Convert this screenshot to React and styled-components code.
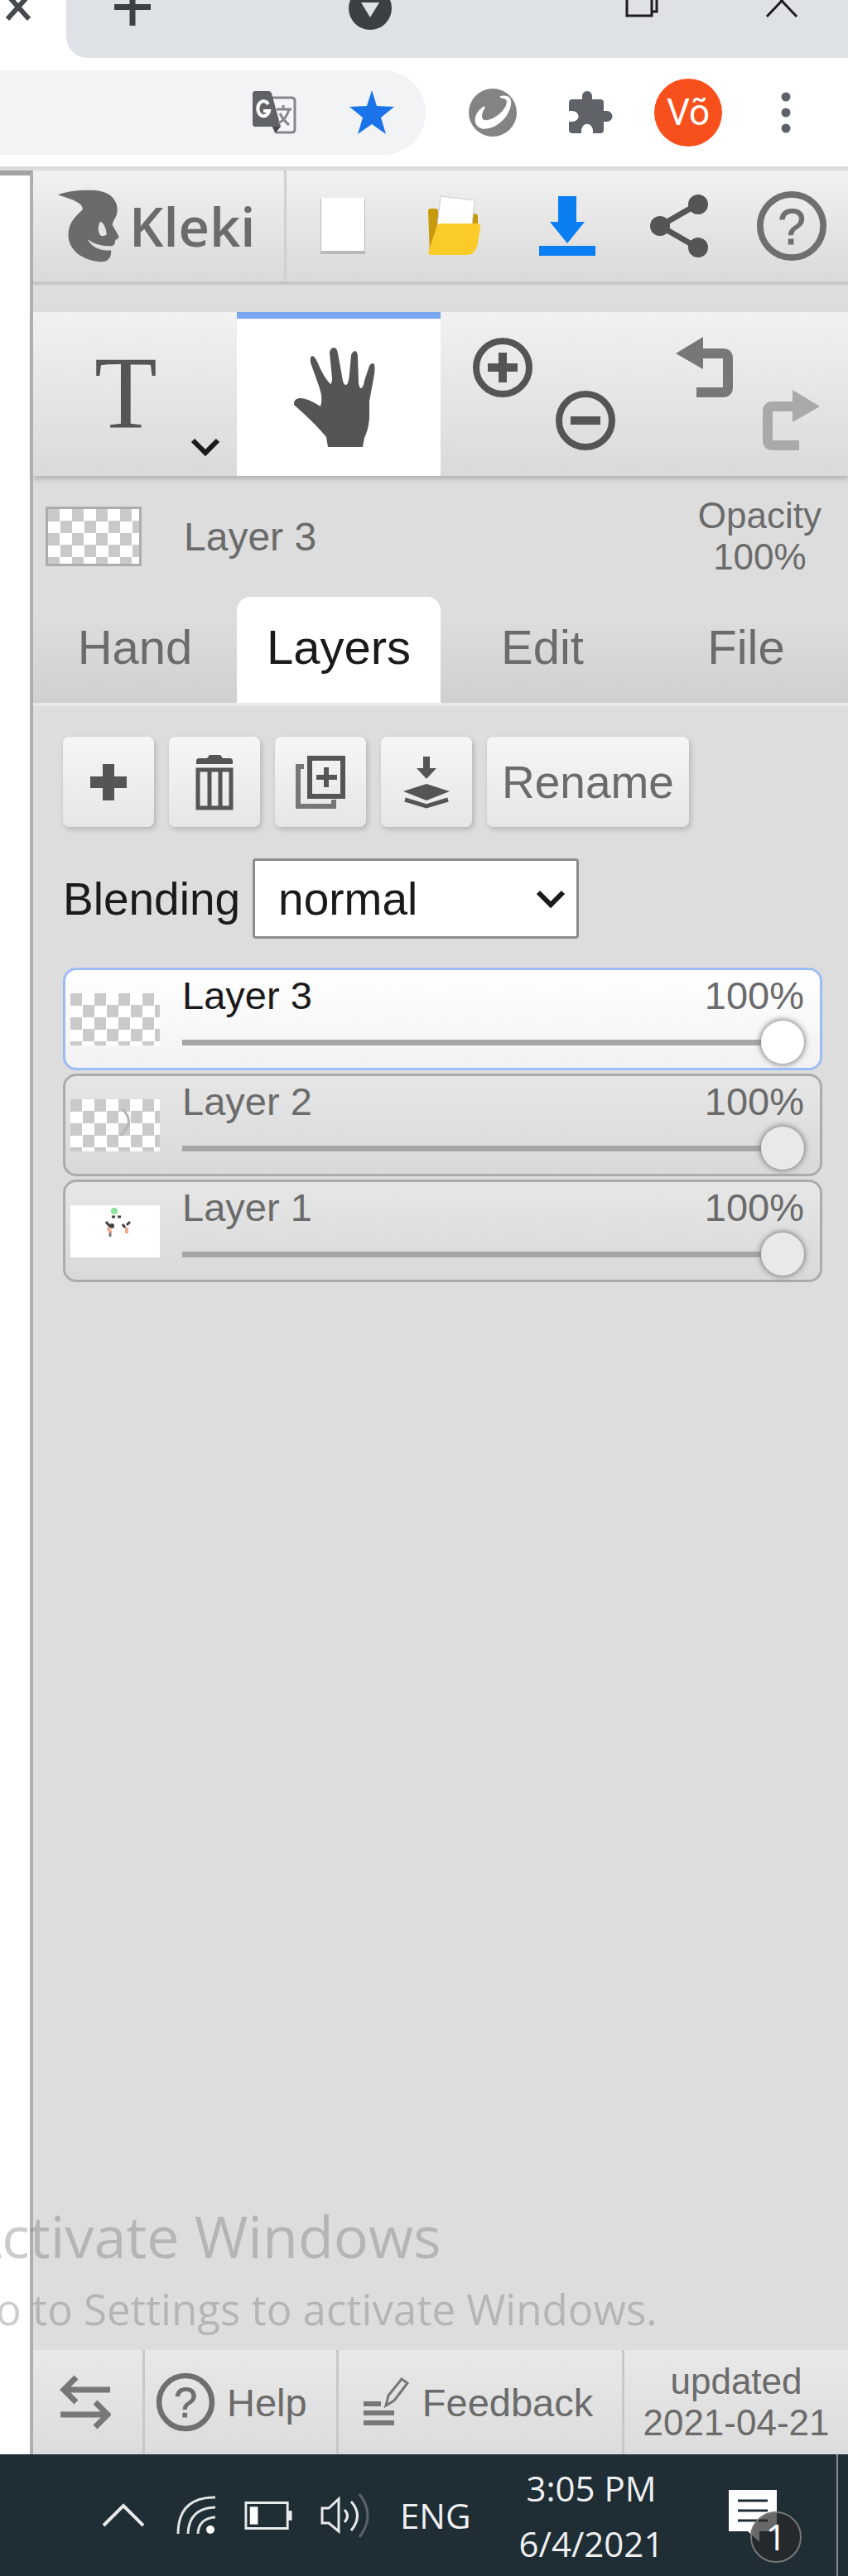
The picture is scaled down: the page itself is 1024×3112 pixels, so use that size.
import React, { useState } from 'react'
import styled, { createGlobalStyle } from 'styled-components'

const GlobalStyle = createGlobalStyle`
  * { box-sizing: border-box; }
  body {
    margin: 0;
    font-family: 'Liberation Sans', Arial, sans-serif;
    background: #fff;
  }
  button, input, select { font-family: inherit; color: inherit; }
  button { padding: 0; border: 0; background: none; cursor: pointer; }
  svg { display: block; flex: none; }
`

const Page = styled.div`
  min-height: 100vh;
  display: flex;
  flex-direction: column;
  overflow: hidden;
`

// Browser chrome
const TitleBar = styled.div`
  display: flex;
  height: 70px;
`
const ActiveTab = styled.div`
  width: 80px;
  padding-left: 6px;
`
const TabStrip = styled.div`
  flex: 1;
  display: flex;
  align-items: flex-start;
  padding: 0 60px 0 57px;
  background: #dee1e6;
  border-bottom-left-radius: 26px;
`
const TabSearch = styled.button`
  margin-left: 238px;
`
const WindowButtons = styled.div`
  margin-left: auto;
  display: flex;
  gap: 128px;
`
const Toolbar = styled.div`
  display: flex;
  align-items: center;
  height: 136px;
  padding: 0 16px 0 0;
  border-bottom: 5px solid #d9dadf;
`
const Omnibox = styled.div`
  flex: 1;
  min-width: 0;
  display: flex;
  align-items: center;
  height: 102px;
  margin-right: 22px;
  padding-right: 6px;
  background: #f1f3f4;
  border-radius: 0 51px 51px 0;
`
const AddressInput = styled.input`
  flex: 1;
  min-width: 0;
  border: 0;
  outline: 0;
  background: transparent;
`
const ToolbarButton = styled.button`
  width: 118px;
  display: flex;
  justify-content: center;
`
const Avatar = styled.span`
  width: 82px;
  height: 82px;
  border-radius: 50%;
  background: #f8501c;
  color: #fff;
  font: 44px/82px Roboto, sans-serif;
  text-align: center;
`

// Kleki
const Workspace = styled.div`
  position: relative;
  flex: 1;
  display: flex;
`
const Canvas = styled.div`
  width: 40px;
  background: #fff;
  border-top: 6px solid #a2a2a2;
  border-right: 4px solid #aeaeae;
`
const Panel = styled.div`
  flex: 1;
  min-width: 0;
  display: flex;
  flex-direction: column;
  background: #dddddd;
  color: #6b6b6b;
`
const Header = styled.div`
  display: flex;
  height: 138px;
  background: linear-gradient(#f1f1f1, #dadada);
  border-bottom: 4px solid #c6c6c6;
`
const Logo = styled.a`
  width: 306px;
  display: flex;
  align-items: center;
  gap: 11px;
  padding-left: 29px;
  border-right: 3px solid #d0d0d0;
  font: 600 65px/88px 'Open Sans', sans-serif;
  color: #6b6b6b;
  text-decoration: none;
`
const HeaderActions = styled.div`
  flex: 1;
  display: grid;
  grid-template-columns: repeat(5, 1fr);
`
const IconButton = styled.button`
  display: flex;
  align-items: center;
  justify-content: center;
`
const ToolRow = styled.div`
  display: grid;
  grid-template-columns: repeat(4, 1fr);
  height: 198px;
  margin-top: 33px;
  background: linear-gradient(#f1f1f1, #dadada);
  box-shadow: 0 4px 6px #b4b4b4;
`
const TextTool = styled.button`
  display: flex;
  align-items: center;
  padding-left: 74px;
  color: #555;
  font: 124px/140px 'Liberation Serif', serif;
`
const ToolArrow = styled.span`
  align-self: flex-end;
  margin-left: 40px;
  padding-bottom: 22px;
`
const HandTool = styled(IconButton)`
  padding-right: 8px;
  background: #fff;
  border-top: 8px solid #7ba6f2;
`
const ToolPair = styled.div`
  display: flex;
  justify-content: space-between;
  align-items: flex-start;
  padding: 30px 34px 30px 38px;

  button:last-child { align-self: flex-end; }
`
const LayerPreview = styled.div`
  display: flex;
  align-items: center;
  height: 146px;
  padding: 0 32px 0 15px;
  font-size: 48px;
`
const PreviewThumb = styled.div`
  width: 116px;
  height: 72px;
  margin-right: 51px;
  border: 3px solid #acacac;
  background: repeating-conic-gradient(#fff 0 25%, #cacaca 0 50%) 0 0 / 29px 29px;
`
const Opacity = styled.div`
  margin-left: auto;
  font-size: 44px;
  line-height: 50px;
  text-align: center;
`
const Tabs = styled.div`
  display: grid;
  grid-template-columns: repeat(4, 1fr);
  height: 132px;
  background: linear-gradient(#dddddd 20%, #d0d0d0);
  border-bottom: 4px solid #e9e9e9;
`
const Tab = styled.button`
  padding-bottom: 8px;
  font-size: 58px;
  color: ${({ $active }) => ($active ? '#1a1a1a' : '#6b6b6b')};
  background: ${({ $active }) => ($active ? '#fff' : 'transparent')};
  border-radius: 16px 16px 0 0;
`
const LayersPane = styled.div`
  flex: 1;
  padding: 37px 31px 0 36px;
`
const ButtonRow = styled.div`
  display: flex;
  gap: 18px;
`
const PaneButton = styled.button`
  display: flex;
  align-items: center;
  justify-content: center;
  width: ${({ $wide }) => ($wide ? '244px' : '110px')};
  height: 109px;
  font-size: 55px;
  background: linear-gradient(#f6f6f6, #e6e6e6);
  border-radius: 8px;
  box-shadow: 2px 3px 6px #b4b4b4;
`
const BlendRow = styled.div`
  display: flex;
  align-items: center;
  gap: 15px;
  margin: 38px 0 35px;
  font-size: 55px;
  color: #1a1a1a;
`
const SelectBox = styled.div`
  position: relative;
  svg {
    position: absolute;
    right: 16px;
    top: 38px;
    pointer-events: none;
  }
`
const Select = styled.select`
  appearance: none;
  width: 394px;
  height: 97px;
  padding: 0 28px;
  font-size: 55px;
  background: #fff;
  border: 3px solid #8c8c8c;
  border-radius: 4px;
`
const LayerList = styled.div`
  display: flex;
  flex-direction: column;
  gap: 4px;
`
const LayerCard = styled.div`
  display: flex;
  align-items: center;
  gap: 27px;
  height: 124px;
  padding: 0 19px 0 6px;
  border: 3px solid ${({ $active }) => ($active ? '#9dbcf5' : '#ababab')};
  border-radius: 16px;
  background: ${({ $active }) => ($active ? 'linear-gradient(#fff, #f2f2f2)' : 'linear-gradient(#e6e6e6, #d9d9d9)')};
`
const LayerThumb = styled.div`
  width: 108px;
  height: 63px;
  background: ${({ $filled }) => ($filled ? '#fff' : 'repeating-conic-gradient(#fff 0 25%, #cacaca 0 50%) 0 0 / 29px 29px')};
`
const LayerBody = styled.div`
  flex: 1;
  min-width: 0;
`
const LayerTitle = styled.div`
  display: flex;
  justify-content: space-between;
  font-size: 47px;
  line-height: 54px;
  label { color: ${({ $active }) => ($active ? '#1a1a1a' : 'inherit')}; }
`
const Slider = styled.input`
  appearance: none;
  display: block;
  width: 100%;
  height: 54px;
  margin: 2px 0 0;
  background: linear-gradient(#a6a6a6, #a6a6a6) 0 50% / 97% 7px no-repeat;

  &::-webkit-slider-thumb {
    appearance: none;
    width: 52px;
    height: 52px;
    border-radius: 50%;
    background: ${({ $active }) => ($active ? '#fff' : '#e9e9e9')};
    box-shadow: 0 0 7px 1px #777;
  }
`
const Footer = styled.div`
  display: flex;
  height: 126px;
  background: linear-gradient(#e8e8e8, #dcdcdc);
`
const FooterItem = styled.button`
  display: flex;
  align-items: center;
  justify-content: center;
  gap: 14px;
  width: ${({ $width }) => $width};
  flex: ${({ $grow }) => ($grow ? 1 : 'none')};
  padding-right: 6px;
  font-size: 47px;
  border-right: 3px solid #c8c8c8;
`
const HelpItem = styled(FooterItem)`
  justify-content: flex-start;
  padding-left: 13px;
`
const Updated = styled.div`
  align-self: center;
  width: 270px;
  font-size: 44px;
  line-height: 50px;
  text-align: center;
`
const Watermark = styled.div`
  position: absolute;
  left: -42px;
  bottom: 142px;
  color: rgba(110, 110, 110, 0.36);
  font: 51px/68px 'Open Sans', sans-serif;
  white-space: nowrap;
  pointer-events: none;
`
const WatermarkTitle = styled.div`
  font-size: 70px;
  line-height: 108px;
`

// Windows taskbar
const Taskbar = styled.div`
  display: flex;
  align-items: center;
  height: 147px;
  padding-right: 12px;
  background: #1f2d35;
  color: #eef0f1;
  font: 42px/67px 'Open Sans', sans-serif;
`
const Tray = styled.div`
  display: flex;
  align-items: center;
  gap: 34px;
  padding-left: 123px;
`
const Clock = styled.div`
  margin-left: 58px;
  text-align: center;
`
const Notifications = styled.button`
  position: relative;
  margin-left: auto;
  margin-right: 71px;
`
const Badge = styled.span`
  position: absolute;
  left: 27px;
  top: 27px;
  width: 62px;
  height: 62px;
  border: 2px solid #777;
  border-radius: 50%;
  background: rgba(40, 40, 40, 0.7);
  color: #fff;
  font: 44px/56px 'Open Sans', sans-serif;
  text-align: center;
`
const DesktopEdge = styled.div`
  align-self: stretch;
  width: 2px;
  background: #87898c;
`

const CloseTabIcon = () => (
  <svg width="32" height="26" viewBox="0 0 32 26" stroke="#45494d" strokeWidth="6">
    <path d="M3 -6 29 23M29 -6 3 23" />
  </svg>
)
const NewTabIcon = () => (
  <svg width="46" height="32" viewBox="0 0 46 32" stroke="#3c4043" strokeWidth="7">
    <path d="M1 8.500H45M23 0V31" />
  </svg>
)
const TabSearchIcon = () => (
  <svg width="52" height="37" viewBox="0 0 52 37">
    <circle cx="26" cy="10" r="26" fill="#3c4043" />
    <path d="M15 3H37L26 21Z" fill="#dee1e6" />
  </svg>
)
const RestoreIcon = () => (
  <svg width="42" height="22" viewBox="0 0 42 22" fill="none" stroke="#1d1d1f" strokeWidth="3">
    <path d="M3 0V19H33V0M33 14H39V0" />
  </svg>
)
const CloseIcon = () => (
  <svg width="40" height="22" viewBox="0 0 40 22" fill="none" stroke="#1d1d1f" strokeWidth="3">
    <path d="M2 20 20 1 38 20M18 0H22" />
  </svg>
)
const TranslateIcon = () => (
  <svg width="54" height="54" viewBox="0 0 54 54">
    <path d="M23 9H48Q52 9 52 13V47Q52 51 48 51H30L25 43" fill="#f5f6f7" stroke="#85888b" strokeWidth="3" />
    <path d="M4 1H20Q23 1 24 4L35 44H4Q1 44 1 40V5Q1 1 4 1Z" fill="#5f6368" />
    <path d="M20 17A7 9 0 1 0 21 25H14" fill="none" stroke="#fff" strokeWidth="4" />
    <path d="M30 23H48M38 18V23M45 23Q42 35 32 40M34 28Q38 36 45 42" fill="none" stroke="#85888b" strokeWidth="3" />
    <path d="M26 44H35L28 52Z" fill="#45484b" />
  </svg>
)
const StarIcon = () => (
  <svg width="54" height="54" viewBox="0 0 54 54">
    <path d="M27 0 33 19 54 20 38 33 44 53 27 41 10 53 16 33 0 20 21 19Z" fill="#1a73e8" />
  </svg>
)
const SwirlIcon = () => (
  <svg width="60" height="60" viewBox="0 0 60 60">
    <circle cx="30" cy="30" r="29" fill="#838383" />
    <path d="M39 11Q53 8 51 21Q47 38 31 46Q14 53 10 42Q8 31 20 23Q14 33 17 38Q21 43 32 37Q47 28 48 17Q48 12 39 11Z" fill="#fff" stroke="#fff" strokeWidth="2" />
  </svg>
)
const PuzzleIcon = () => (
  <svg width="54" height="54" viewBox="0 0 54 54">
    <path d="M5 11H17V7A6 6 0 0 1 29 7V11H39Q43 11 43 15V25H47A6 6 0 0 1 47 38H43V48Q43 52 39 52H30V49A6 7 0 0 0 16 49V52H5Q1 52 1 48V38H5A7 6 0 0 0 5 25H1V15Q1 11 5 11Z" fill="#5f6368" />
  </svg>
)
const MenuIcon = () => (
  <svg width="12" height="50" viewBox="0 0 12 50" fill="#5f6368">
    <circle cx="6" cy="6" r="5.500" />
    <circle cx="6" cy="25" r="5.500" />
    <circle cx="6" cy="44" r="5.500" />
  </svg>
)
const KlekiIcon = () => (
  <svg width="76" height="88" viewBox="88 92 228 266">
    <path
      fillRule="evenodd"
      fill="#6b6b6b"
      d="M90 112C125 96 190 92 235 96C288 103 312 140 306 175C304 195 290 203 289 222L312 262Q313 272 299 276Q301 294 285 298Q235 301 198 273Q222 317 284 314Q286 336 273 348Q260 358 238 355C175 348 128 310 128 258C128 212 155 190 180 165C184 140 130 124 90 112ZM246 208C235 220 235 245 244 258Q255 266 268 256Q265 220 246 208Z"
    />
  </svg>
)
const NewIcon = () => (
  <svg width="56" height="72" viewBox="0 0 56 72">
    <path d="M1 3H55V70H1Z" fill="#b9b9b9" />
    <path d="M2 2H54V66H2Z" fill="#fff" />
  </svg>
)
const FolderIcon = () => (
  <svg width="68" height="76" viewBox="0 0 68 76">
    <path d="M2 20Q2 17 5 17H11Q14 17 14 21V24H56Q60 22 62 25V60L4 72Z" fill="#c79a0b" />
    <path d="M17 2 58 7 54 48H12Z" fill="#fff" stroke="#ccc" />
    <path d="M17 35H61Q66 35 65 41L61 63Q58 73 48 73H6Q1 73 3 67L12 40Q13 35 17 35Z" fill="#fbcb2a" />
  </svg>
)
const SaveIcon = () => (
  <svg width="68" height="74" viewBox="0 0 68 74" fill="#0b7ff2">
    <path d="M23 1H45V32H55L34 58 13 32H23ZM0 61H68V73H0Z" />
  </svg>
)
const ShareIcon = () => (
  <svg width="72" height="78" viewBox="0 0 72 78" fill="#555">
    <path d="M57 13 12 39 57 65" fill="none" stroke="#555" strokeWidth="7" />
    <circle cx="12" cy="39" r="12" />
    <circle cx="58" cy="13" r="12" />
    <circle cx="58" cy="65" r="12" />
  </svg>
)
const HelpIcon = ({ size, color = '#6f6f6f' }) => (
  <svg width={size} height={size} viewBox="0 0 88 88">
    <circle cx="44" cy="44" r="39" fill="none" stroke={color} strokeWidth="8" />
    <text x="44" y="66" textAnchor="middle" fontSize="62" fontFamily="Liberation Sans, sans-serif" fill={color} stroke={color}>?</text>
  </svg>
)
const Chevron = ({ color = '#1a1a1a' }) => (
  <svg width="36" height="24" viewBox="0 0 36 24" fill="none" stroke={color} strokeWidth="6">
    <path d="M3 3 18 18 33 3" />
  </svg>
)
const HandIcon = () => (
  <svg width="100" height="120" viewBox="0 0 100 120">
    <path
      fill="#555"
      d="M39 108Q25 91 0 69Q-1 62 7 61Q15 60 32 71Q35 61 31 49L20 18Q19 11 22 10Q25 10 29 19Q36 36 44 44Q46 43 46 37L43 6Q44 0 48 0Q52 0 53 7L59 40Q60 45 63 45Q66 44 67 32L69 9Q71 4 74 4Q77 5 77 12L78 43Q79 49 81 49Q84 48 85 40L91 22Q94 17 97 20Q98 24 97 32L91 65V85Q90 99 85 109L83 120H41Z"
    />
  </svg>
)
const ZoomIcon = ({ plus }) => (
  <svg width="74" height="74" viewBox="0 0 74 74" fill="none" stroke="#555">
    <circle cx="37" cy="37" r="32" strokeWidth="8" />
    <path d={plus ? 'M19 37H55M37 19V55' : 'M19 37H55'} strokeWidth="10" />
  </svg>
)
const UndoIcon = () => (
  <svg width="70" height="74" viewBox="0 0 70 74">
    <path d="M26 20H57Q63 20 63 26V61Q63 67 57 67H25" fill="none" stroke="#777" strokeWidth="12" />
    <path d="M0 20 33 0V39Z" fill="#777" />
  </svg>
)
const RedoIcon = () => (
  <svg width="70" height="74" viewBox="0 0 70 74">
    <path d="M44 20H13Q7 20 7 26V61Q7 67 13 67H45" fill="none" stroke="#a9a9a9" strokeWidth="12" />
    <path d="M70 20 37 0V39Z" fill="#a9a9a9" />
  </svg>
)
const AddIcon = () => (
  <svg width="44" height="46" viewBox="0 0 44 46" stroke="#555" strokeWidth="14">
    <path d="M0 23H44M22 1V45" />
  </svg>
)
const TrashIcon = () => (
  <svg width="46" height="68" viewBox="0 0 46 68" fill="none" stroke="#555">
    <path d="M1 12V8Q1 5 5 5H14L17 1H30L33 5H41Q45 5 45 8V12Z" fill="#555" stroke="none" />
    <path d="M3 19H43V65H3Z" strokeWidth="5" />
    <path d="M17 18V66M30 18V66" strokeWidth="5" />
  </svg>
)
const DuplicateIcon = () => (
  <svg width="60" height="64" viewBox="0 0 60 64" fill="none" stroke="#555" strokeWidth="6">
    <path d="M17 3H57V49H17Z" />
    <path d="M10 13H3V61H46V53" stroke="#777" />
    <path d="M25 26H50M37 14V38" />
  </svg>
)
const MergeIcon = () => (
  <svg width="58" height="64" viewBox="0 0 58 64" fill="#555">
    <path d="M25 1H33V15H41L29 28 17 15H25Z" />
    <path d="M29 34 57 43 29 54 1 43Z" />
    <path d="M3 53 29 61 55 53" fill="none" stroke="#555" strokeWidth="5" />
  </svg>
)
const SwapIcon = () => (
  <svg width="62" height="66" viewBox="0 0 62 66" fill="none" stroke="#777" strokeWidth="7">
    <path d="M61 18H4M20 3 5 18 20 33M1 48H58M43 33 58 48 43 63" />
  </svg>
)
const FeedbackIcon = () => (
  <svg width="58" height="60" viewBox="0 0 58 60" fill="none" stroke="#777">
    <path d="M1 32H22M1 43H38M1 55H38" strokeWidth="6" />
    <path d="M28 34 31 22 47 2 54 7 38 28Z" strokeWidth="3" />
  </svg>
)
const CaretUpIcon = () => (
  <svg width="52" height="30" viewBox="0 0 52 30" fill="none" stroke="#e8eaeb" strokeWidth="4">
    <path d="M2 27 26 3 50 27" />
  </svg>
)
const WifiIcon = () => (
  <svg width="52" height="48" viewBox="-4 0 52 48" fill="none" stroke="#e0e3e4" strokeWidth="3">
    <path d="M2 46Q2 2 47 2M14 46Q15 15 47 14M26 46Q27 27 47 26" />
    <circle cx="41" cy="41" r="5" fill="#fff" stroke="none" />
  </svg>
)
const BatteryIcon = () => (
  <svg width="58" height="36" viewBox="0 0 60 36" fill="none" stroke="#e8eaeb" strokeWidth="3">
    <path d="M2 2H54V34H2Z" />
    <path d="M7 7H17V29H7Z" fill="#fff" stroke="none" />
    <path d="M57 12V24" strokeWidth="5" />
  </svg>
)
const SpeakerIcon = () => (
  <svg width="62" height="56" viewBox="2 0 62 56" fill="none" stroke="#e8eaeb" strokeWidth="3">
    <path d="M4 19H12L24 8V47L12 37H4Z" />
    <path d="M31 21Q38 28 31 36M39 11Q54 28 39 46" />
    <path d="M49 2Q69 28 49 54" stroke="#58636a" />
  </svg>
)
const MessageIcon = () => (
  <svg width="60" height="64" viewBox="0 0 60 64">
    <path d="M1 1H59V51H38V64L24 51H1Z" fill="#fff" />
    <path d="M12 14H48M12 26H48M12 38H48" stroke="#1f2d35" strokeWidth="3" />
  </svg>
)
const FlowerSketch = () => (
  <svg width="108" height="63" viewBox="0 0 108 63">
    <circle cx="53" cy="7" r="4" fill="#8fe39a" />
    <path d="M50 14H54M57 14H61M43 20 48 26M72 20 68 24M63 23 66 27" stroke="#444" strokeWidth="3" />
    <circle cx="50" cy="25" r="3" fill="#444" />
    <path d="M45 27 49 33M68 27V34" stroke="#f5a888" strokeWidth="4" />
    <path d="M48 33V38" stroke="#777" strokeWidth="3" />
  </svg>
)
const LineSketch = () => (
  <svg width="108" height="63" viewBox="0 0 108 63" fill="none" stroke="#b5b5b5" strokeWidth="3">
    <path d="M63 12Q74 23 69 33L61 44" />
  </svg>
)

const layers = [
  { id: 3, name: 'Layer 3' },
  { id: 2, name: 'Layer 2', sketch: <LineSketch /> },
  { id: 1, name: 'Layer 1', sketch: <FlowerSketch />, filled: true },
]

const BrowserChrome = () => (
  <header>
    <TitleBar>
      <ActiveTab><button aria-label="Close tab"><CloseTabIcon /></button></ActiveTab>
      <TabStrip>
        <button aria-label="New tab"><NewTabIcon /></button>
        <TabSearch aria-label="Search tabs"><TabSearchIcon /></TabSearch>
        <WindowButtons>
          <button aria-label="Restore"><RestoreIcon /></button>
          <button aria-label="Close"><CloseIcon /></button>
        </WindowButtons>
      </TabStrip>
    </TitleBar>
    <Toolbar>
      <Omnibox>
        <AddressInput aria-label="Address" />
        <ToolbarButton aria-label="Translate"><TranslateIcon /></ToolbarButton>
        <ToolbarButton aria-label="Bookmark"><StarIcon /></ToolbarButton>
      </Omnibox>
      <ToolbarButton aria-label="Extension"><SwirlIcon /></ToolbarButton>
      <ToolbarButton aria-label="Extensions"><PuzzleIcon /></ToolbarButton>
      <ToolbarButton aria-label="Profile"><Avatar>Võ</Avatar></ToolbarButton>
      <ToolbarButton aria-label="Menu"><MenuIcon /></ToolbarButton>
    </Toolbar>
  </header>
)

const Layer = ({ layer, active, onSelect }) => {
  const [opacity, setOpacity] = useState(100)
  const id = `layer-${layer.id}`

  return (
    <LayerCard $active={active} onClick={onSelect}>
      <LayerThumb $filled={layer.filled}>{layer.sketch}</LayerThumb>
      <LayerBody>
        <LayerTitle $active={active}>
          <label htmlFor={id}>{layer.name}</label>
          <span>{opacity}%</span>
        </LayerTitle>
        <Slider id={id} type="range" min="0" max="100" value={opacity} $active={active} onChange={e => setOpacity(e.target.value)} />
      </LayerBody>
    </LayerCard>
  )
}

const App = () => {
  const [tab, setTab] = useState('Layers')
  const [activeLayer, setActiveLayer] = useState(3)

  return (
    <Page>
      <GlobalStyle />
      <BrowserChrome />
      <Workspace>
        <Canvas />
        <Panel>
          <Header>
            <Logo href="#"><KlekiIcon />Kleki</Logo>
            <HeaderActions>
              <IconButton aria-label="New"><NewIcon /></IconButton>
              <IconButton aria-label="Open"><FolderIcon /></IconButton>
              <IconButton aria-label="Save"><SaveIcon /></IconButton>
              <IconButton aria-label="Share"><ShareIcon /></IconButton>
              <IconButton aria-label="Help"><HelpIcon size={86} /></IconButton>
            </HeaderActions>
          </Header>
          <ToolRow>
            <TextTool aria-label="Text tool">T<ToolArrow><Chevron /></ToolArrow></TextTool>
            <HandTool aria-label="Hand tool"><HandIcon /></HandTool>
            <ToolPair>
              <button aria-label="Zoom in"><ZoomIcon plus /></button>
              <button aria-label="Zoom out"><ZoomIcon /></button>
            </ToolPair>
            <ToolPair>
              <button aria-label="Undo"><UndoIcon /></button>
              <button aria-label="Redo"><RedoIcon /></button>
            </ToolPair>
          </ToolRow>
          <LayerPreview>
            <PreviewThumb />
            Layer {activeLayer}
            <Opacity>Opacity<br />100%</Opacity>
          </LayerPreview>
          <Tabs>
            {['Hand', 'Layers', 'Edit', 'File'].map(name => (
              <Tab key={name} $active={name === tab} onClick={() => setTab(name)}>{name}</Tab>
            ))}
          </Tabs>
          <LayersPane>
            <ButtonRow>
              <PaneButton aria-label="Add layer"><AddIcon /></PaneButton>
              <PaneButton aria-label="Remove layer"><TrashIcon /></PaneButton>
              <PaneButton aria-label="Duplicate layer"><DuplicateIcon /></PaneButton>
              <PaneButton aria-label="Merge layer"><MergeIcon /></PaneButton>
              <PaneButton $wide>Rename</PaneButton>
            </ButtonRow>
            <BlendRow>
              <label htmlFor="blending">Blending</label>
              <SelectBox>
                <Select id="blending">
                  <option>normal</option>
                  <option>multiply</option>
                  <option>screen</option>
                </Select>
                <Chevron />
              </SelectBox>
            </BlendRow>
            <LayerList>
              {layers.map(layer => (
                <Layer key={layer.id} layer={layer} active={layer.id === activeLayer} onSelect={() => setActiveLayer(layer.id)} />
              ))}
            </LayerList>
          </LayersPane>
          <Footer>
            <FooterItem $width="135px" aria-label="Switch sides"><SwapIcon /></FooterItem>
            <HelpItem $width="234px"><HelpIcon size={72} />Help</HelpItem>
            <FooterItem $grow><FeedbackIcon />Feedback</FooterItem>
            <Updated>updated<br />2021-04-21</Updated>
          </Footer>
        </Panel>
        <Watermark>
          <WatermarkTitle>Activate Windows</WatermarkTitle>
          Go to Settings to activate Windows.
        </Watermark>
      </Workspace>
      <Taskbar>
        <Tray>
          <CaretUpIcon />
          <WifiIcon />
          <BatteryIcon />
          <SpeakerIcon />
          <span>ENG</span>
        </Tray>
        <Clock>3:05 PM<br />6/4/2021</Clock>
        <Notifications aria-label="Notifications">
          <MessageIcon />
          <Badge>1</Badge>
        </Notifications>
        <DesktopEdge />
      </Taskbar>
    </Page>
  )
}

export default App
